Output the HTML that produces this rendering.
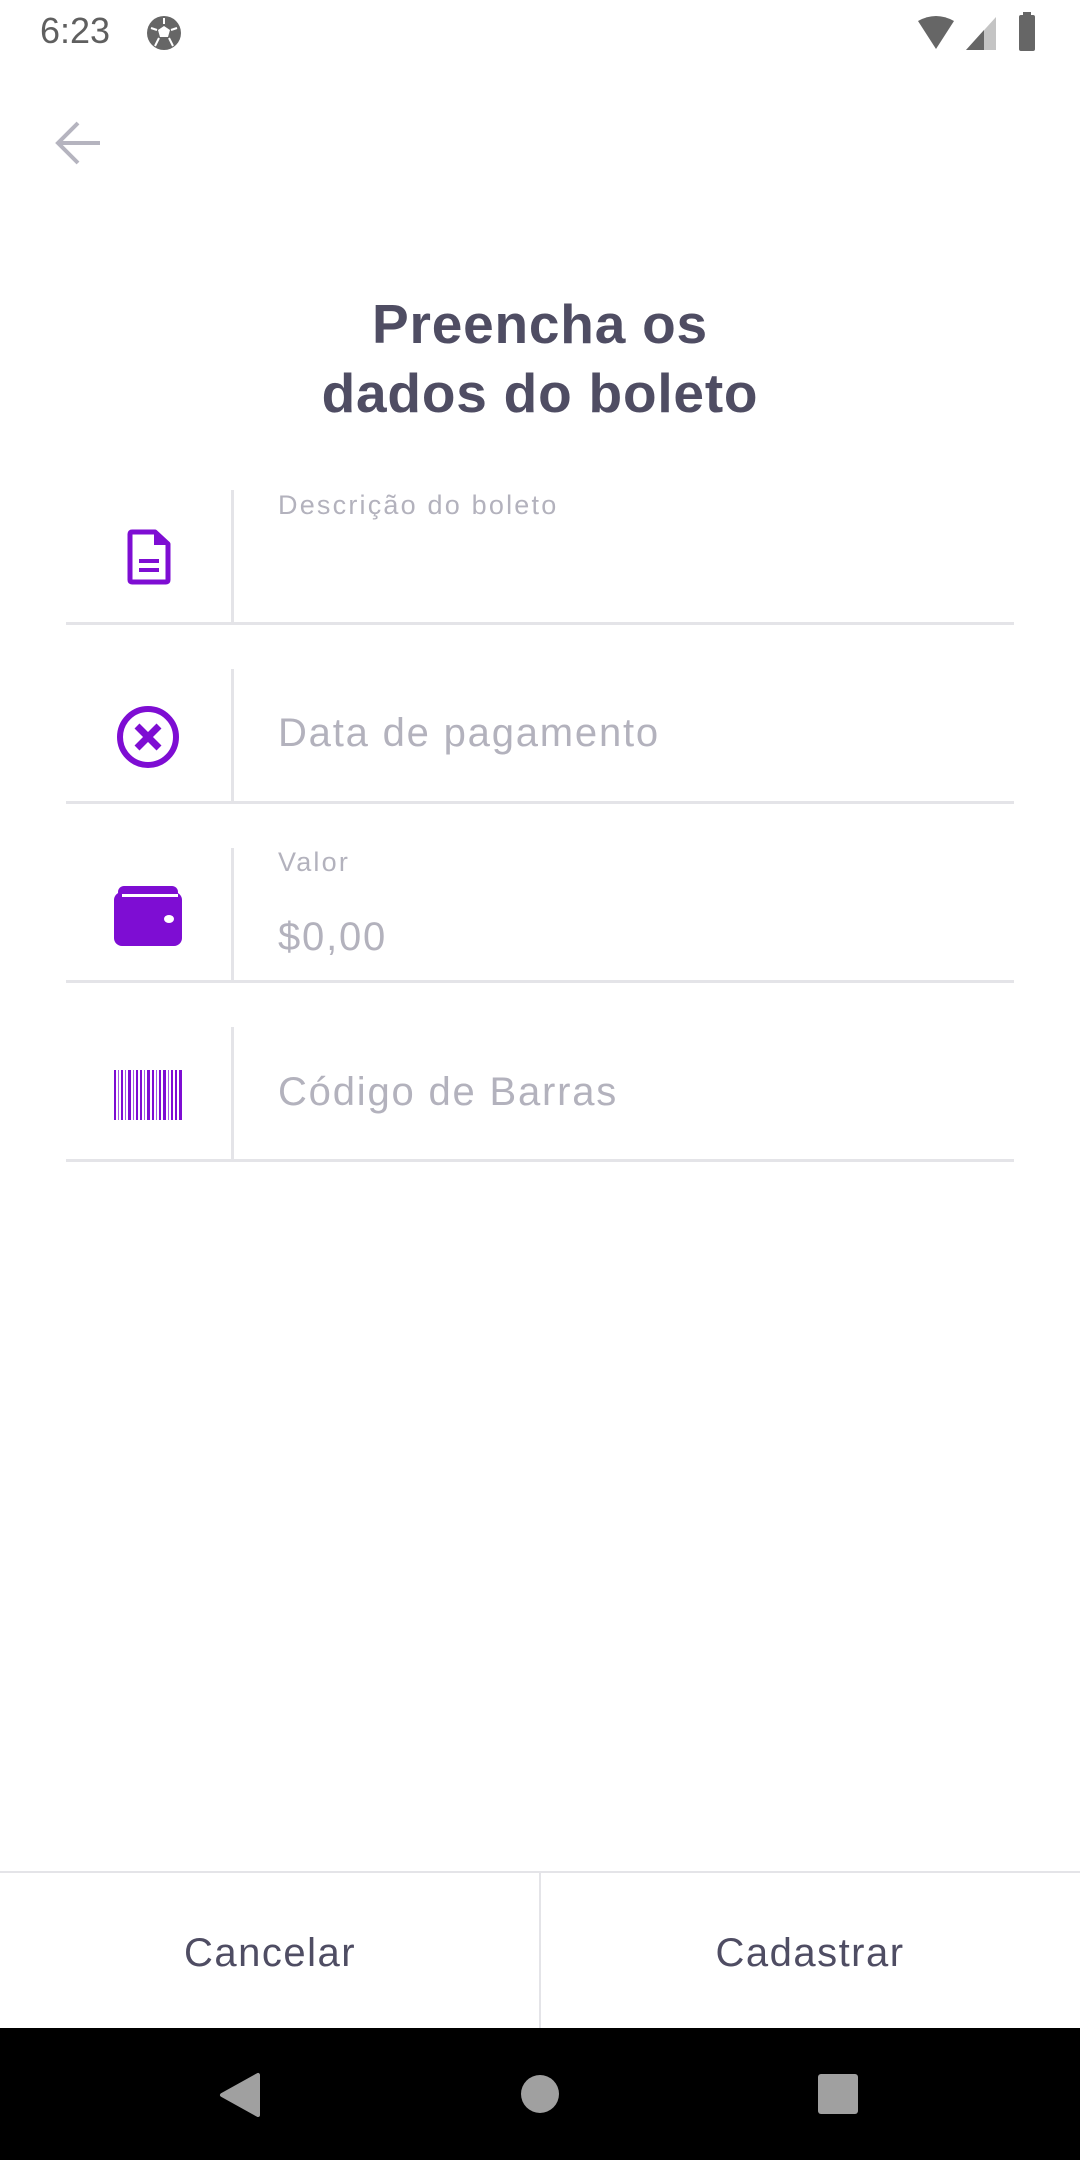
<!DOCTYPE html>
<html><head><meta charset="utf-8"><style>
*{margin:0;padding:0;box-sizing:border-box}
body{width:1080px;height:2160px;background:#fff;position:relative;overflow:hidden;font-family:"Liberation Sans",sans-serif}
.abs{position:absolute}
.title{left:0;width:1080px;text-align:center;font-weight:bold;font-size:55px;color:#4f4d63;line-height:69px;top:290px;letter-spacing:0.8px}
.hl{height:3px;background:#e4e4e8;left:66px;width:948px}
.vl{width:3px;background:#e4e4e8;left:231px}
.ph{color:#b3b2bd;left:278px}
.big{font-size:40px;letter-spacing:1.8px}
.sm{font-size:27px;letter-spacing:2.2px}
</style></head><body>
<div class="abs" style="left:40px;top:10px;font-size:36px;color:#5f5f5f">6:23</div>
<svg class="abs" style="left:146px;top:15px" width="36" height="36" viewBox="0 0 36 36"><circle cx="18" cy="18" r="17" fill="#666"/><polygon points="18,11 24,15 22,22 14,22 12,15" fill="#fff"/><path d="M18 3v6M31 13l-6 2M27 31l-4-8M9 31l4-8M5 13l6 2" stroke="#fff" stroke-width="2"/></svg>
<svg class="abs" style="left:916px;top:15px" width="40" height="36" viewBox="0 0 40 36"><path d="M2 6Q20-4 38 6L20 34Z" fill="#666"/></svg>
<svg class="abs" style="left:964px;top:15px" width="34" height="36" viewBox="0 0 34 36"><path d="M2 35L32 2V35Z" fill="#c4c4c4"/><path d="M2 35L20 15V35Z" fill="#666"/></svg>
<div class="abs" style="left:1019px;top:15px;width:16px;height:36px;background:#666;border-radius:2px"></div>
<div class="abs" style="left:1023px;top:12px;width:8px;height:4px;background:#666"></div>
<svg class="abs" style="left:52px;top:120px" width="50" height="46" viewBox="0 0 50 46"><path d="M48 23H6M26 3L6 23L26 43" stroke="#b5b4bf" stroke-width="4" fill="none"/></svg>
<div class="abs title">Preencha os<br>dados do boleto</div>

<div class="abs vl" style="top:490px;height:133px"></div>
<div class="abs hl" style="top:622px"></div>
<div class="abs vl" style="top:669px;height:133px"></div>
<div class="abs hl" style="top:801px"></div>
<div class="abs vl" style="top:848px;height:133px"></div>
<div class="abs hl" style="top:980px"></div>
<div class="abs vl" style="top:1027px;height:133px"></div>
<div class="abs hl" style="top:1159px"></div>

<svg class="abs" style="left:127px;top:529px" width="44" height="56" viewBox="0 0 44 56"><path d="M5 3H28L41 15V51Q41 53 39 53H5Q3 53 3 51V5Q3 3 5 3Z" fill="none" stroke="#7e0dd3" stroke-width="5" stroke-linejoin="round"/><path d="M27 3V16H41Z" fill="#7e0dd3"/><rect x="12" y="30" width="20" height="4" fill="#7e0dd3"/><rect x="12" y="39" width="20" height="4" fill="#7e0dd3"/></svg>
<svg class="abs" style="left:116px;top:705px" width="64" height="64" viewBox="0 0 64 64"><circle cx="32" cy="32" r="28" fill="none" stroke="#7e0dd3" stroke-width="6"/><path d="M21 21L43 43M43 21L21 43" stroke="#7e0dd3" stroke-width="7"/></svg>
<svg class="abs" style="left:114px;top:886px" width="68" height="60" viewBox="0 0 68 60"><rect x="0" y="6" width="68" height="54" rx="8" fill="#7e0dd3"/><rect x="4" y="0" width="60" height="12" rx="6" fill="#7e0dd3"/><rect x="8" y="8" width="56" height="3" fill="#fff"/><ellipse cx="55" cy="33" rx="5" ry="4" fill="#fff"/></svg>
<svg class="abs" style="left:114px;top:1070px" width="68" height="50" viewBox="0 0 68 50"><g fill="#7e0dd3"><rect x="0" width="2" height="50"/><rect x="4" width="1" height="50" fill="#a55be6"/><rect x="7" width="2" height="50"/><rect x="11" width="1" height="50" fill="#a55be6"/><rect x="14" width="3" height="50"/><rect x="19" width="1" height="50" fill="#a55be6"/><rect x="22" width="2" height="50"/><rect x="26" width="2" height="50"/><rect x="30" width="1" height="50" fill="#a55be6"/><rect x="33" width="3" height="50"/><rect x="38" width="2" height="50"/><rect x="42" width="1" height="50" fill="#a55be6"/><rect x="45" width="2" height="50"/><rect x="49" width="3" height="50"/><rect x="54" width="1" height="50" fill="#a55be6"/><rect x="57" width="2" height="50"/><rect x="61" width="2" height="50"/><rect x="65" width="3" height="50"/></g></svg>

<div class="abs ph sm" style="top:490px">Descrição do boleto</div>
<div class="abs ph big" style="top:711px">Data de pagamento</div>
<div class="abs ph sm" style="top:847px">Valor</div>
<div class="abs ph big" style="top:915px">$0,00</div>
<div class="abs ph big" style="top:1070px">Código de Barras</div>

<div class="abs" style="left:0;top:1871px;width:1080px;height:2px;background:#e4e4e8"></div>
<div class="abs" style="left:539px;top:1872px;width:2px;height:156px;background:#e4e4e8"></div>
<div class="abs" style="left:0;width:540px;top:1931px;text-align:center;font-size:40px;letter-spacing:1.5px;color:#4f4d63">Cancelar</div>
<div class="abs" style="left:540px;width:540px;top:1931px;text-align:center;font-size:40px;letter-spacing:1.5px;color:#4f4d63">Cadastrar</div>
<div class="abs" style="left:0;top:2028px;width:1080px;height:132px;background:#000"></div>
<svg class="abs" style="left:218px;top:2072px" width="44" height="46" viewBox="0 0 44 46"><path d="M40 3V43L4 23Z" fill="#a0a0a0" stroke="#a0a0a0" stroke-width="4" stroke-linejoin="round"/></svg>
<div class="abs" style="left:521px;top:2075px;width:38px;height:38px;border-radius:50%;background:#a0a0a0"></div>
<div class="abs" style="left:818px;top:2074px;width:40px;height:40px;border-radius:3px;background:#a0a0a0"></div>
</body></html>
